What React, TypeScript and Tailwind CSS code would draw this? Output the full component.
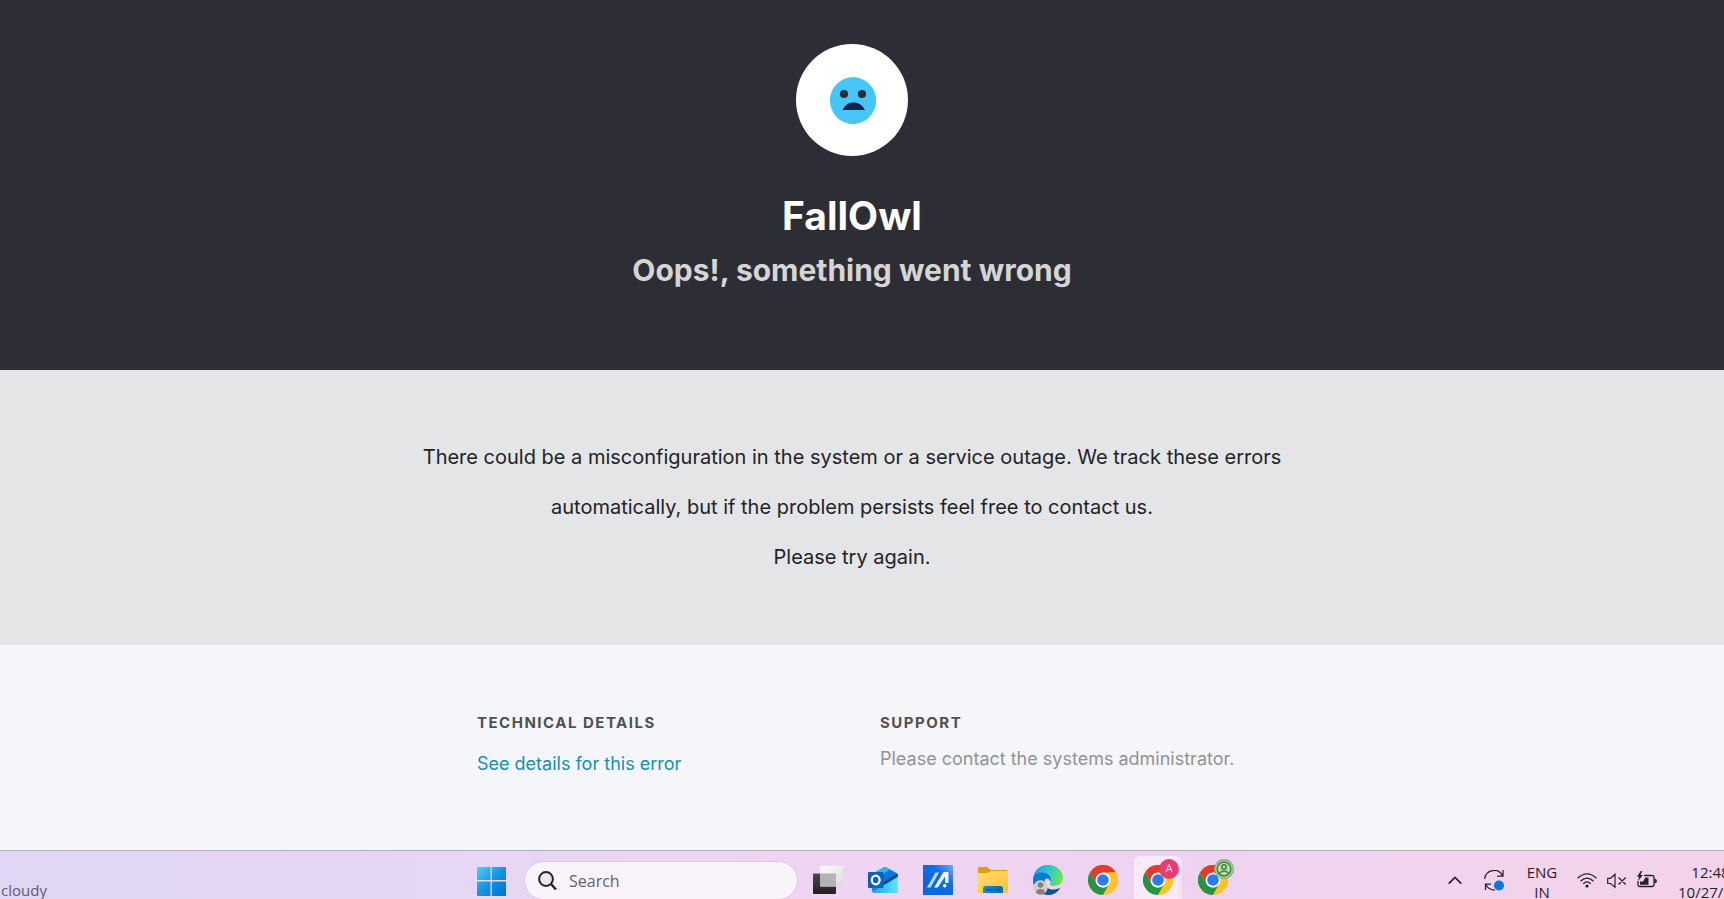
import React from "react";

function SadFace() {
  return (
    <div className="flex h-28 w-28 items-center justify-center rounded-full bg-white">
      <svg width="48" height="48" viewBox="0 0 48 48">
        <ellipse cx="25" cy="24.6" rx="23.1" ry="23.5" fill="#46c6f6" />
        <circle cx="16" cy="18" r="4.1" fill="#2d2d35" />
        <circle cx="34" cy="18" r="4.1" fill="#2d2d35" />
        <path d="M14.5 34C17.5 28 21.5 26.4 25.7 26.4S34 28.500 37 34Z" fill="#14204f" />
      </svg>
    </div>
  );
}

function Chrome() {
  return (
    <svg width="30" height="30" viewBox="0 0 30 30" className="block">
      <circle cx="15" cy="15" r="15" fill="#ffc21f" />
      <path d="M15 7.500H28A15 15 0 0 0 2 7.500L8.500 18.750Z" fill="#e23a2e" />
      <path d="M2 7.500A15 15 0 0 0 15 30L21.500 18.750A7.500 7.500 0 0 1 8.500 18.750Z" fill="#249447" />
      <path d="M15 30 21.500 18.750A7.500 7.500 0 0 0 21.500 11.250L21 7.500H28A15 15 0 0 1 15 30Z" fill="#fcc32b" />
      <circle cx="15" cy="15" r="7.500" fill="#fff" />
      <circle cx="15" cy="15" r="5.800" fill="#287cee" />
    </svg>
  );
}

function WindowsLogo() {
  return (
    <svg width="30" height="30" viewBox="0 0 30 30" className="block">
      <defs>
        <linearGradient id="win" x1="0" y1="0" x2="29" y2="30" gradientUnits="userSpaceOnUse">
          <stop offset="0" stopColor="#4cd4ff" />
          <stop offset=".5" stopColor="#1794e0" />
          <stop offset="1" stopColor="#0070cf" />
        </linearGradient>
      </defs>
      <path fill="url(#win)" d="M1 1H13.500V14H0V2Q0 1 1 1ZM14.800 1H28Q29 1 29 2V14H14.800ZM0 15.400H13.500V30H1Q0 30 0 29ZM14.800 15.400H29V29Q29 30 28 30H14.800Z" />
    </svg>
  );
}

function TaskView() {
  return (
    <svg width="30" height="30" viewBox="0 0 30 30" className="block">
      <defs>
        <linearGradient id="tvd" x1="0" y1="0" x2="0" y2="1">
          <stop stopColor="#4c4a4c" /><stop offset="1" stopColor="#202020" />
        </linearGradient>
        <linearGradient id="tvl" x1="0" y1="0" x2="1" y2="1">
          <stop stopColor="#fff" /><stop offset="1" stopColor="#dcd9dc" />
        </linearGradient>
      </defs>
      <rect y="8.500" width="23" height="20.500" rx="1" fill="url(#tvd)" />
      <rect x="7" y="1" width="23" height="20.500" rx="1" fill="url(#tvl)" />
      <path d="M7.500 8.500H23V21.500H8Q7 21.500 7 20.500V9Z" fill="#b5b3b5" />
    </svg>
  );
}

function Outlook() {
  return (
    <svg width="30" height="30" viewBox="0 0 30 30" className="block">
      <defs>
        <linearGradient id="oe" x1="0" y1="0" x2="1" y2="0">
          <stop stopColor="#20a5e8" /><stop offset="1" stopColor="#5be7fa" />
        </linearGradient>
      </defs>
      <path d="M4 9 15.500 2.500Q17 1.600 18.500 2.500L29 8.500Q30 9 30 10V25Q30 28 27 28H7Q4 28 4 25Z" fill="#168bdc" />
      <path d="M4 9 15.500 2.500Q17 1.600 18.500 2.500L22 4.500 8 14 4 12Z" fill="#2cb5ee" />
      <path d="M22 4.500 29 8.500 15 18 8 14Z" fill="#0879d2" />
      <path d="M29 8.500Q30 9 30 11L17 20 14 18Z" fill="#0a489b" />
      <path d="M30 12V25Q30 28 27 28H7Q5 28 4.500 26.500L17 19.500Z" fill="url(#oe)" />
      <rect y="7" width="15.500" height="16" rx="1" fill="#0763bd" />
      <ellipse cx="7.700" cy="15" rx="3.900" ry="4.400" fill="none" stroke="#fff" strokeWidth="2.300" />
    </svg>
  );
}

function AsusApp() {
  return (
    <svg width="30" height="30" viewBox="0 0 30 30" className="block">
      <defs>
        <linearGradient id="as" x1="0.300" y1="0.700" x2="1" y2="0">
          <stop stopColor="#0669e3" /><stop offset=".5" stopColor="#126fe2" /><stop offset="1" stopColor="#73a9ed" />
        </linearGradient>
      </defs>
      <rect width="30" height="30" fill="url(#as)" />
      <path d="M4 22.500 12.500 7.500H16L7.500 22.500Z" fill="#c3daf8" />
      <path d="M11 22.500 20.500 7H25.500V18H22V11.500L14.800 22.500Z" fill="#edf5ff" />
      <circle cx="21.700" cy="20.800" r="1.800" fill="#fff" />
    </svg>
  );
}

function Explorer() {
  return (
    <svg width="30" height="30" viewBox="0 0 30 30" className="block">
      <defs>
        <linearGradient id="fo" x1="0" y1="0" x2="1" y2="1">
          <stop stopColor="#ffdc70" /><stop offset="1" stopColor="#fdc32d" />
        </linearGradient>
        <linearGradient id="fb" x1="0" y1="0" x2="1" y2="0">
          <stop stopColor="#1689d9" /><stop offset="1" stopColor="#0968b7" />
        </linearGradient>
      </defs>
      <path d="M0 3.500Q0 2 1.500 2H9L13 5H28.500Q30 5 30 6.500V12H0Z" fill="#df9d0b" />
      <path d="M0 8H10L13 6H30V27Q30 28 29 28H1Q0 28 0 27Z" fill="url(#fo)" />
      <path d="M5 28V23.500Q5 21 7.500 21H22.500Q25 21 25 23.500V28Z" fill="url(#fb)" />
      <path d="M9 24.700H21" stroke="#064b82" strokeWidth="1.300" strokeLinecap="round" />
    </svg>
  );
}

function Edge() {
  return (
    <svg width="30" height="30" viewBox="0 0 30 30" className="block">
      <defs>
        <linearGradient id="ed" x1="0" y1="0" x2="30" y2="12" gradientUnits="userSpaceOnUse">
          <stop stopColor="#1597df" /><stop offset=".45" stopColor="#2cc0dc" /><stop offset="1" stopColor="#6ae94d" />
        </linearGradient>
      </defs>
      <path d="M0 14C1 5 7 0 15 0C24 0 30 6 30 13C30 18 26 21 21 21C17 21 16.500 19 17.500 17C18.500 14 16.500 9 9 9C4 9 1 11 0 14Z" fill="url(#ed)" />
      <path d="M0 14C1 9 5 7.500 9 7.500C16 7.500 19 13 17.500 17C16 12 11 12 11 19C11 24 15 29 20 29C9 33 -1 24 0 14Z" fill="#087cce" />
      <path d="M12 15C10 24 20 27 27.500 22.500C25 27 21 30 15 30C10 29 8 20 12 15Z" fill="#114f98" />
      <circle cx="7.500" cy="22.500" r="7.200" fill="#d2cfca" />
      <circle cx="7.500" cy="20" r="2.800" fill="#85817e" />
      <path d="M3 28Q3 24 7.500 24T12 28Q7.500 31 3 28Z" fill="#85817e" />
    </svg>
  );
}

function PersonBadge() {
  return (
    <svg width="20" height="20" viewBox="0 0 20 20" className="absolute -top-[6px] left-[16px]">
      <circle cx="10" cy="10" r="10" fill="#83a878" />
      <circle cx="10" cy="10" r="8.700" fill="#b5dfa3" />
      <circle cx="10" cy="10" r="6.900" fill="none" stroke="#438444" strokeWidth="1.500" />
      <circle cx="10" cy="8" r="2.200" fill="none" stroke="#438444" strokeWidth="1.500" />
      <path d="M5 14.500Q10 9.500 15 14.500" fill="none" stroke="#438444" strokeWidth="1.500" />
    </svg>
  );
}

function Tray() {
  return (
    <div className="flex h-full items-start text-[#272229]">
      <svg width="14" height="10" viewBox="0 0 14 10" className="mt-[25px] block" fill="none" stroke="currentColor" strokeWidth="1.700">
        <path d="M.7 7.700 7 1.500 13.300 7.700" />
      </svg>
      <svg width="22" height="22" viewBox="0 0 22 22" className="mt-[19px] ml-[22px] block" fill="none" stroke="currentColor" strokeWidth="1.250">
        <path d="M.7 9A9.500 9.500 0 0 1 18.500 5.500M19 0V6H13M1.500 20V14H7M2 15Q5 20 11 20" />
        <circle cx="15" cy="15.500" r="5" fill="#0879d8" stroke="none" />
      </svg>
      <div className="mt-[11px] ml-[20px] w-8 text-center text-[15px] leading-5">
        <div>ENG</div>
        <div>IN</div>
      </div>
      <svg width="20" height="15" viewBox="0 0 20 15" className="mt-[22px] ml-[19px] block" fill="none" stroke="currentColor" strokeWidth="1.300">
        <path d="M.6 5.300Q10-3.500 19.400 5.300M3.500 8.200Q10 2 16.500 8.200M6.200 10.900Q10 7 13.800 10.900" />
        <circle cx="10" cy="13" r="1.600" fill="currentColor" stroke="none" />
      </svg>
      <svg width="20" height="16" viewBox="0 0 20 16" className="mt-[22px] ml-[10px] block" fill="none" stroke="currentColor" strokeWidth="1.200">
        <path d="M.7 5.300H3.500L8 1.200V14.300L3.500 10.500H.7ZM11.500 4.500 18.700 11.500M18.700 4.500 11.500 11.500" />
      </svg>
      <svg width="20" height="17" viewBox="0 0 20 17" className="mt-[20px] ml-[10px] block" fill="none" stroke="currentColor" strokeWidth="1.300">
        <path d="M7 4.500H15Q17 4.500 17 6.500V13.500Q17 15.500 15 15.500H3Q1 15.500 1 13.500V10" />
        <path d="M3 13.800V10.500H6L8.500 6.500H11.500V13.800Z" fill="currentColor" stroke="none" />
        <path d="M3.800 0 0 5.700H2L1 10 6 4H3.500L5.300 0ZM17.500 7.500Q20 8 20 10T17.500 12.500Z" fill="currentColor" stroke="none" />
      </svg>
      <div className="mt-[11px] ml-[21px] w-[78px] shrink-0 text-right text-[15px] leading-5 whitespace-nowrap">
        <div>12:48 PM</div>
        <div>10/27/2025</div>
      </div>
    </div>
  );
}

function Taskbar() {
  return (
    <footer className="flex h-[49px] items-start overflow-hidden border-t border-[#b9adbc] bg-[linear-gradient(90deg,#dfd7f5_0%,#e2d6f3_12%,#e6d7f4_28%,#efd5f2_47%,#eed3f1_70%,#f2d3ed_84%,#f4d3ea_100%)] font-['Open_Sans',sans-serif]">
      <div className="flex w-[477px] shrink-0">
        <span className="mt-[28px] -ml-[43px] text-[15px] leading-[22px] whitespace-nowrap text-[#635b6b]">Partly cloudy</span>
      </div>
      <div className="mt-[15px] w-[47px] shrink-0"><WindowsLogo /></div>
      <div className="mt-[10px] flex h-[39px] w-[274px] shrink-0 items-center rounded-full border border-[#dec7e4] bg-[#f9f3fb] pl-[13px]">
        <svg width="19" height="20" viewBox="0 0 19 20" fill="#ebe8ef" stroke="#242226" strokeWidth="2">
          <circle cx="8" cy="8" r="6.900" />
          <path d="m13 13 5 5.500" strokeWidth="2.500" />
        </svg>
        <span className="ml-[12px] text-[16px] text-[#65606a]">Search</span>
      </div>
      <div className="mt-[14px] ml-[15px] flex shrink-0 gap-[25px]">
        <TaskView />
        <Outlook />
        <AsusApp />
        <Explorer />
        <Edge />
        <Chrome />
      </div>
      <div className="mt-[5px] ml-4 h-[50px] w-[48px] shrink-0 rounded-md border-r-4 border-[#f4e3f5] bg-[#f8eaf8] pt-[9px] pl-[9px]">
        <div className="relative w-[30px]">
          <Chrome />
          <span className="absolute -top-[6px] left-[16px] flex h-5 w-5 items-center justify-center rounded-full bg-[#e63d75] font-['Roboto',sans-serif] text-[11px] text-[#ffd6e4]">A</span>
        </div>
      </div>
      <div className="relative mt-[14px] ml-4 w-[30px] shrink-0">
        <Chrome />
        <PersonBadge />
      </div>
      <div className="ml-[220px] shrink-0"><Tray /></div>
    </footer>
  );
}

export default function App() {
  return (
    <div className="flex h-[899px] w-full flex-col overflow-hidden font-['Inter',sans-serif]">
      <header className="flex h-[370px] shrink-0 flex-col items-center bg-[#2d2d35] pt-11 pr-5">
        <SadFace />
        <h1 className="mt-9 text-[39px] leading-[48px] font-bold text-white">FallOwl</h1>
        <h2 className="mt-[10px] text-[30px] leading-[40px] font-bold text-[#d5d5d6]">Oops!, something went wrong</h2>
      </header>
      <section className="h-[275px] shrink-0 bg-[#e4e5e7] pt-[62px] pr-5 text-center text-[20px] leading-[50px] text-[#222326]">
        <p>There could be a misconfiguration in the system or a service outage. We track these errors</p>
        <p>automatically, but if the problem persists feel free to contact us.</p>
        <p>Please try again.</p>
      </section>
      <main className="flex h-[205px] shrink-0 bg-[#f5f6fa] pt-[67px] pl-[477px]">
        <section className="w-[403px]">
          <h3 className="text-[15px] leading-[22px] font-bold tracking-[1.5px] text-[#505052]">TECHNICAL DETAILS</h3>
          <a href="#" className="mt-[16px] block text-[18px] leading-[28px] text-[#168eb5]">See details for this error</a>
        </section>
        <section>
          <h3 className="text-[15px] leading-[22px] font-bold tracking-[1.5px] text-[#505052]">SUPPORT</h3>
          <p className="mt-[11px] text-[18px] leading-[28px] text-[#929295]">Please contact the systems administrator.</p>
        </section>
      </main>
      <Taskbar />
    </div>
  );
}
